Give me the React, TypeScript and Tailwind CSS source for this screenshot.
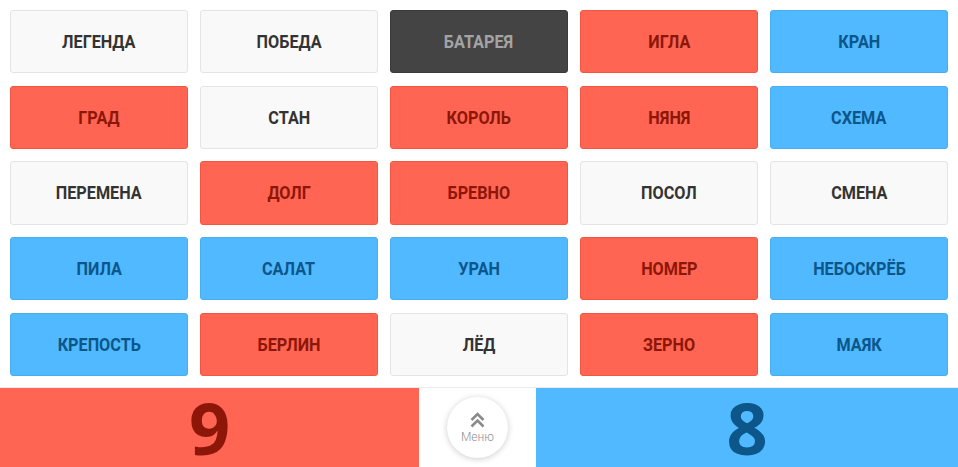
type Kind = "n" | "r" | "b" | "k";

const cards: [string, Kind][] = [
  ["ЛЕГЕНДА", "n"], ["ПОБЕДА", "n"], ["БАТАРЕЯ", "k"], ["ИГЛА", "r"], ["КРАН", "b"],
  ["ГРАД", "r"], ["СТАН", "n"], ["КОРОЛЬ", "r"], ["НЯНЯ", "r"], ["СХЕМА", "b"],
  ["ПЕРЕМЕНА", "n"], ["ДОЛГ", "r"], ["БРЕВНО", "r"], ["ПОСОЛ", "n"], ["СМЕНА", "n"],
  ["ПИЛА", "b"], ["САЛАТ", "b"], ["УРАН", "b"], ["НОМЕР", "r"], ["НЕБОСКРЁБ", "b"],
  ["КРЕПОСТЬ", "b"], ["БЕРЛИН", "r"], ["ЛЁД", "n"], ["ЗЕРНО", "r"], ["МАЯК", "b"],
];

const styles: Record<Kind, string> = {
  n: "bg-[#f9f9f9] border-[#e4e4e4] text-[#333333]",
  r: "bg-[#ff6552] border-[#f4553f] text-[#8c1608]",
  b: "bg-[#50b9ff] border-[#48aef2] text-[#0c5689]",
  k: "bg-[#444444] border-[#3a3a3a] text-[#a3a3a3]",
};

function Card({ word, kind }: { word: string; kind: Kind }) {
  return (
    <div className={`flex items-center justify-center rounded-[3px] border ${styles[kind]}`}>
      <span className="inline-block scale-x-[0.9] font-['Roboto',sans-serif] text-[18px] font-bold">
        {word}
      </span>
    </div>
  );
}

export default function App() {
  return (
    <div className="flex h-[467px] w-[958px] flex-col bg-white">
      <div className="grid grid-cols-5 grid-rows-5 gap-x-3 gap-y-[12.5px] px-[10px] pt-[10px] pb-[11px] h-[387px]">
        {cards.map(([w, k]) => (
          <Card key={w} word={w} kind={k} />
        ))}
      </div>
      <div className="flex flex-1 border-t border-[#ececec]">
        <div className="flex w-[419px] items-center justify-center bg-[#ff6552] font-['Open_Sans',sans-serif] text-[72px] font-bold leading-[79px] text-[#8c1608]">
          9
        </div>
        <div className="flex flex-1 items-center justify-center bg-white">
          <button className="flex h-[61px] w-[61px] flex-col items-center justify-center rounded-full bg-white shadow-[0_1px_6px_rgba(0,0,0,0.2)]">
            <svg width="15" height="16" viewBox="0 0 15 16" fill="none" stroke="#8a8a8a" strokeWidth="2.6">
              <path d="M1.5 8 L7.5 2 L13.5 8" />
              <path d="M1.5 14.5 L7.5 8.5 L13.5 14.5" />
            </svg>
            <span className="mt-[2px] font-['Roboto',sans-serif] text-[12px] font-light leading-[14px] text-[#8f8f8f]">Меню</span>
          </button>
        </div>
        <div className="flex w-[422px] items-center justify-center bg-[#50b9ff] font-['Open_Sans',sans-serif] text-[72px] font-bold leading-[79px] text-[#0c5689]">
          8
        </div>
      </div>
    </div>
  );
}
